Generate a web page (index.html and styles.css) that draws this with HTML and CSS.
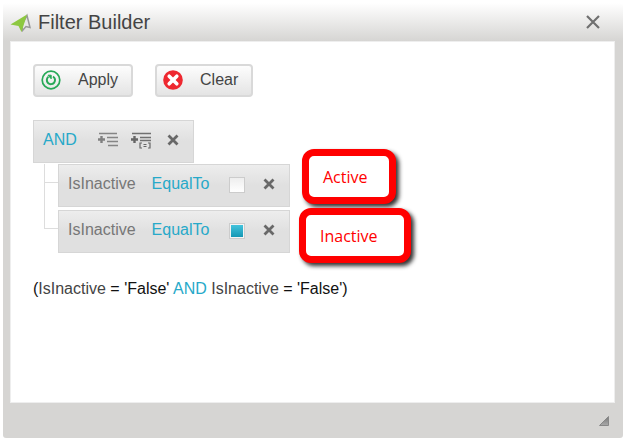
FILE: index.html
```html
<!DOCTYPE html>
<html lang="en">
<head>
  <meta charset="UTF-8">
  <title>Filter Builder</title>
  <meta name="viewport" content="width=device-width, initial-scale=1.0">
  <link rel="stylesheet" href="styles.css">
</head>
<body>
  <div class="dialog" role="dialog" aria-labelledby="dialogTitle">
    <div class="titlebar">
      <svg class="logo" width="22" height="20" viewBox="0 0 22 20">
        <path d="M17 3.500L20 15.500L16 14.500L12.500 18.500L12 13Z" fill="#e8e8e6" stroke="#999" stroke-width="1.500"/>
        <path d="M0.500 12.500L17 2.500L11.500 20L8.500 14Z" fill="#8dc840"/>
      </svg>
      <h1 id="dialogTitle">Filter Builder</h1>
      <button class="close" aria-label="Close">
        <svg width="16" height="16" viewBox="0 0 16 16"><path d="M2 2L14 14M14 2L2 14" stroke="#707070" stroke-width="2.2"/></svg>
      </button>
    </div>

    <div class="content">
      <div class="toolbar">
        <button class="btn">
          <svg width="20" height="20" viewBox="0 0 20 20" fill="none" stroke="#27a957">
            <circle cx="10" cy="10" r="8.8" stroke-width="1.7"/>
            <path d="M12 6.5A4.1 4.1 0 1 1 7.4 6.8" stroke-width="2"/>
            <path d="M7 5.2H10.2V8.8Z" fill="#27a957" stroke-width="1"/>
          </svg>
          Apply
        </button>
        <button class="btn">
          <svg width="20" height="20" viewBox="0 0 20 20">
            <circle cx="10" cy="10" r="9.8" fill="#ee2830"/>
            <path d="M6.2 6.2L13.8 13.8M13.8 6.2L6.2 13.8" stroke="#fff" stroke-width="3.6" stroke-linecap="round"/>
          </svg>
          Clear
        </button>
      </div>

      <div class="group">
        <div class="item group-head">
          <button class="link">AND</button>
          <button class="icon" aria-label="Add condition">
            <svg width="21" height="18" viewBox="0 0 21 18">
              <path d="M2 2.500H20M10 6.500H21M10 10.500H21M11 14.500H21" stroke="#858585" stroke-width="1.600"/>
              <path d="M1 8.500H8M4.500 5V12" stroke="#808080" stroke-width="2.400"/>
            </svg>
          </button>
          <button class="icon" aria-label="Add group">
            <svg width="21" height="18" viewBox="0 0 21 18">
              <path d="M2 2.500H21M10 6.500H21M10 9.500H21" stroke="#707070" stroke-width="1.600"/>
              <path d="M1 8.500H8M4.500 5V12" stroke="#666" stroke-width="2.400"/>
              <path d="M12 12H10V17H12M18 12H20V17H18M13.500 13.500H16.500M13.500 15.500H16.500" fill="none" stroke="#666" stroke-width="1.200"/>
            </svg>
          </button>
          <button class="icon remove" aria-label="Remove group">
            <svg width="12" height="12" viewBox="0 0 12 12"><path d="M1.500 1.500L10.500 10.500M10.500 1.500L1.500 10.500" stroke="#686868" stroke-width="2.800"/></svg>
          </button>
        </div>
        <ul class="conditions">
          <li>
            <div class="item">
              <label for="value1">IsInactive</label>
              <button class="link">EqualTo</button>
              <input type="checkbox" id="value1">
              <button class="icon remove" aria-label="Remove condition">
                <svg width="12" height="12" viewBox="0 0 12 12"><path d="M1.500 1.500L10.500 10.500M10.500 1.500L1.500 10.500" stroke="#686868" stroke-width="2.800"/></svg>
              </button>
            </div>
            <div class="callout callout-active">Active</div>
          </li>
          <li>
            <div class="item">
              <label for="value2">IsInactive</label>
              <button class="link">EqualTo</button>
              <input type="checkbox" id="value2" checked>
              <button class="icon remove" aria-label="Remove condition">
                <svg width="12" height="12" viewBox="0 0 12 12"><path d="M1.500 1.500L10.500 10.500M10.500 1.500L1.500 10.500" stroke="#686868" stroke-width="2.800"/></svg>
              </button>
            </div>
            <div class="callout callout-inactive">Inactive</div>
          </li>
        </ul>
      </div>

      <p class="expression">(<span class="field">IsInactive</span> = 'False' <span class="operator">AND</span> <span class="field">IsInactive</span> = 'False')</p>
    </div>

    <div class="footer">
      <svg width="10" height="10" viewBox="0 0 10 10">
        <defs>
          <linearGradient id="grip" x1="0" y1="0" x2="0" y2="1">
            <stop offset="0" stop-color="#777"/>
            <stop offset="1" stop-color="#aaa"/>
          </linearGradient>
        </defs>
        <path d="M9.500 0.500V9.500H0.500Z" fill="url(#grip)" stroke="#888"/>
      </svg>
    </div>
  </div>
</body>
</html>
```
FILE: styles.css
```css
* {
  box-sizing: border-box;
}
body {
  margin: 0;
  padding: 3px 0 2px 3px;
  min-height: 100vh;
  display: flex;
  background: #fff;
  color: #333;
  font-family: "Liberation Sans", Arial, sans-serif;
  font-size: 16px;
  line-height: 20px;
}
button {
  font: inherit;
  color: inherit;
  cursor: pointer;
}
svg {
  display: block;
}
.dialog {
  flex: 1;
  display: flex;
  flex-direction: column;
  padding: 0 8px 0 7px;
  background: linear-gradient(#fff, #d6d5d3 38px);
  border-radius: 3px;
}
.titlebar {
  height: 38px;
  display: flex;
  align-items: center;
}
.titlebar h1 {
  flex: 1;
  margin: 0 0 0 6px;
  font-size: 20px;
  font-weight: normal;
  color: #444;
}
.close, .link, .icon {
  padding: 0;
  border: none;
  background: none;
}
.close {
  margin-right: 14px;
}
.content {
  flex: 1;
  padding: 22px;
  border: 1px solid #eee;
  background: #fff;
}
.toolbar {
  display: flex;
  gap: 22px;
}
.btn {
  height: 33px;
  display: flex;
  align-items: center;
  gap: 17px;
  padding: 0 13px 2px 6px;
  border: 2px solid #d9d9d9;
  border-radius: 4px;
  background: linear-gradient(#fdfdfd, #e4e4e4);
  color: #444;
}
.group {
  margin-top: 23px;
}
.item {
  height: 43px;
  display: flex;
  align-items: center;
  width: max-content;
  padding: 0 14px 4px 9px;
  border: 1px solid #d6d6d6;
  background: linear-gradient(#ededed, #e0e0e0 50%);
  color: #777;
}
.group-head {
  gap: 12px;
}
.group-head .link {
  margin-right: 8px;
}
.link {
  color: #27a9c9;
}
.conditions {
  list-style: none;
  margin: 0;
  padding: 1px 0 0 25px;
}
.conditions li {
  position: relative;
  margin-bottom: 3px;
}
/* tree connector */
.conditions li::before {
  content: "";
  position: absolute;
  left: -14px;
  top: 0;
  width: 13px;
  height: 18px;
  border: solid #ddd;
  border-width: 0 0 1px 1px;
}
.conditions li + li::before {
  top: -29px;
  height: 47px;
}
.conditions .link {
  margin: 0 20px 0 16px;
}
.remove {
  margin-left: 4px;
}
.conditions .remove {
  margin-left: 18px;
}
input[type="checkbox"] {
  appearance: none;
  width: 16px;
  height: 16px;
  margin: 2px 0 0;
  border: 1px solid #ccc;
  background: linear-gradient(#eee, #fff);
}
input[type="checkbox"]:checked {
  padding: 1px;
  background: linear-gradient(#43c3dc, #1597b4) content-box, #f4f4f4;
}
.callout {
  position: absolute;
  z-index: 1;
  height: 55px;
  padding: 11px 21px 7px 14px;
  border: 7px solid #f00;
  border-radius: 12px;
  background: #fff;
  box-shadow: 3px 3px 4px #333;
  color: #f00;
  font-family: "Open Sans", "Noto Sans", sans-serif;
}
.callout-active {
  left: 244px;
  top: -15px;
}
.callout-inactive {
  left: 241px;
  top: -2px;
  padding-right: 26px;
}
.expression {
  margin: 26px 0 0;
  color: #111;
}
.field {
  color: #444;
}
.operator {
  color: #27a9c9;
}
.footer {
  height: 35px;
  display: flex;
  align-items: center;
  justify-content: flex-end;
  padding-right: 6px;
}
```
